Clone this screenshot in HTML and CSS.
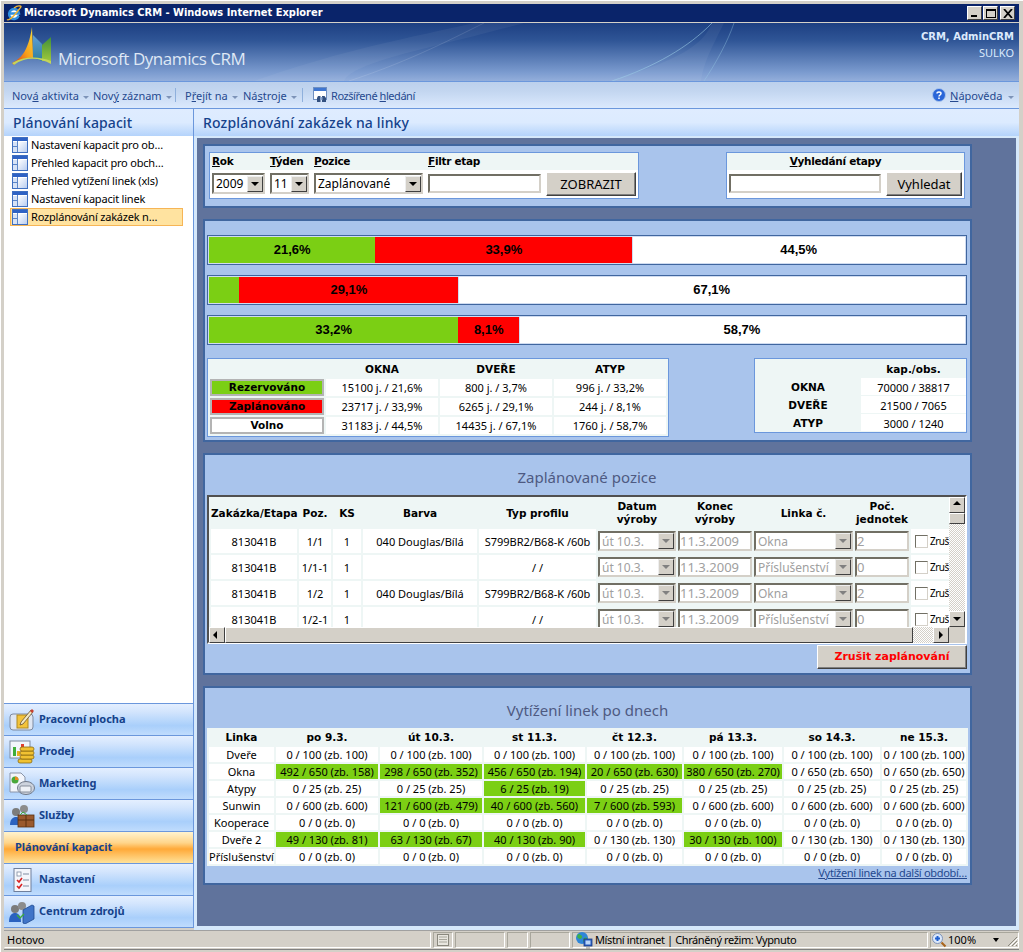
FILE: index.html
```html
<!DOCTYPE html>
<html lang="cs">
<head>
<meta charset="utf-8">
<title>Microsoft Dynamics CRM</title>
<link rel="stylesheet" href="styles.css">
</head>
<body>
<svg class="defs" width="0" height="0" aria-hidden="true">
  <defs>
    <linearGradient id="g-pane" x1="0" y1="0" x2="1" y2="1"><stop offset="0" stop-color="#fff"/><stop offset="1" stop-color="#b9cdf0"/></linearGradient>
    <symbol id="i-list" viewBox="0 0 16 16">
      <rect x=".5" y=".5" width="15" height="15" fill="#fff" stroke="#3f6fc0"/>
      <rect x="1" y="1" width="14" height="3" fill="#2f62c4"/>
      <rect x="6" y="5" width="9" height="10" fill="url(#g-pane)"/>
      <path d="M5.500 4v11M1 9.500h4" stroke="#5c86c8" fill="none"/>
      <rect x="1" y="5" width="4" height="4" fill="#d6e2f6"/>
      <rect x="1" y="10" width="4" height="5" fill="#d6e2f6"/>
    </symbol>
  </defs>
</svg>
<div class="window">
  <div class="titlebar">
    <svg class="ie" viewBox="0 0 16 16" width="16" height="16" aria-hidden="true">
      <circle cx="8" cy="8.500" r="5" fill="#fff"/>
      <path d="M12.700 10.800A5 5 0 1 1 13 8.500H3.500" fill="none" stroke="#2f8fe0" stroke-width="2.400"/>
      <path d="M1 14.500C3 16 7 12 11 7S16 1.500 14 1 10 1.500 8 3" fill="none" stroke="#f2b632" stroke-width="1.400"/>
    </svg>
    <span class="titletext">Microsoft Dynamics CRM - Windows Internet Explorer</span>
    <div class="winbtns">
      <span class="winbtn"><i class="g-min"></i></span>
      <span class="winbtn"><i class="g-max"></i></span>
      <span class="winbtn winbtn-x"><svg viewBox="0 0 10 9" width="10" height="9" aria-hidden="true"><path d="M1 0l8 9M9 0l-8 9" fill="none" stroke="#000" stroke-width="1.800"/></svg></span>
    </div>
  </div>
  <div class="brandbar">
    <svg class="swoosh" viewBox="0 0 1015 58" width="1015" height="58" aria-hidden="true">
      <path d="M250 58C330 30 380 20 470 0H520C430 25 350 38 340 58Z" fill="#fff" opacity=".05"/>
      <path d="M345 58C400 40 440 20 480 0" fill="none" stroke="#fff" stroke-opacity=".12"/>
      <path d="M605 58C680 36 700 20 708 0H720C705 30 700 40 697 58Z" fill="#fff" opacity=".05"/>
      <path d="M608 58C650 44 685 24 708 0" fill="none" stroke="#9fd0e8" stroke-opacity=".55"/>
      <path d="M700 58C712 40 724 18 730 0" fill="none" stroke="#9fd0e8" stroke-opacity=".35"/>
    </svg>
    <svg class="logo" viewBox="0 0 46 40" width="46" height="40" aria-hidden="true">
      <defs>
        <linearGradient id="g-l1" x1="0" y1="1" x2="1" y2="0"><stop offset="0" stop-color="#d62a12"/><stop offset=".5" stop-color="#f7a01a"/><stop offset="1" stop-color="#f8dc3a"/></linearGradient>
        <linearGradient id="g-l2" x1="0" y1="1" x2="0" y2="0"><stop offset="0" stop-color="#2f7f9c"/><stop offset="1" stop-color="#5d9ed8"/></linearGradient>
        <linearGradient id="g-l3" x1="0" y1="1" x2="0" y2="0"><stop offset="0" stop-color="#9ec83a"/><stop offset="1" stop-color="#3f8f3a"/></linearGradient>
      </defs>
      <path d="M21 8l9 9v17L21 31Z" fill="url(#g-l2)"/>
      <path d="M30 18l9-8 0 24H30Z" fill="url(#g-l3)"/>
      <path d="M0 36C8 32 16 26 20 0L21 31C14 30 6 33 2 38Z" fill="url(#g-l1)"/>
      <path d="M2 38C14 29 28 31 39 37L39 34C27 29 12 29 0 36Z" fill="#c4d45a"/>
    </svg>
    <span class="brandname">Microsoft Dynamics CRM</span>
    <div class="userbox">
      <div class="username">CRM, AdminCRM</div>
      <div class="userorg">SULKO</div>
    </div>
  </div>
  <div class="toolbar">
    <span class="tool tool-a">Nov<u>á</u> aktivita<i class="caret"></i></span>
    <span class="tool tool-b">Nov<u>ý</u> záznam<i class="caret"></i></span>
    <i class="toolsep"></i>
    <span class="tool tool-c">P<u>ř</u>ejít na<i class="caret"></i></span>
    <span class="tool tool-d">Ná<u>s</u>troje<i class="caret"></i></span>
    <i class="toolsep toolsep-b"></i>
    <svg class="toolicon" viewBox="0 0 16 16" width="16" height="16" aria-hidden="true">
      <rect x=".5" y=".5" width="13" height="12" fill="#fff" stroke="#6f8fc0"/>
      <rect x="1" y="1" width="12" height="3" fill="#3f76d0"/>
      <path d="M5 9h2.500v6H4v-4Zm4 0h2.500l1.500 2v4H9Z" fill="#33507f"/>
      <rect x="7" y="10" width="2.500" height="3" fill="#8aa4cc"/>
    </svg>
    <span class="tool tool-e">Rozšířené <u>h</u>ledání</span>
    <span class="toolspacer"></span>
    <svg class="helpicon" viewBox="0 0 14 14" width="14" height="14" aria-hidden="true">
      <circle cx="7" cy="7" r="6.500" fill="#2a66d8" stroke="#a9c4ec"/>
      <path d="M5 5.500C5 3.500 9 3.500 9 5.500 9 7 7 7 7 8.500" fill="none" stroke="#fff" stroke-width="1.500"/>
      <rect x="6.200" y="9.500" width="1.600" height="1.600" fill="#fff"/>
    </svg>
    <span class="tool tool-help"><u>N</u>ápověda<i class="caret"></i></span>
  </div>
  <div class="workspace">
    <aside class="sidebar">
      <div class="sidetitle">Plánování kapacit</div>
      <ul class="sidelist">
        <li class="sideitem"><svg class="listicon" aria-hidden="true"><use href="#i-list"/></svg>Nastavení kapacit pro ob…</li>
        <li class="sideitem"><svg class="listicon" aria-hidden="true"><use href="#i-list"/></svg>Přehled kapacit pro obch…</li>
        <li class="sideitem"><svg class="listicon" aria-hidden="true"><use href="#i-list"/></svg>Přehled vytížení linek (xls)</li>
        <li class="sideitem"><svg class="listicon" aria-hidden="true"><use href="#i-list"/></svg>Nastavení kapacit linek</li>
        <li class="sideitem sideitem-on"><svg class="listicon" aria-hidden="true"><use href="#i-list"/></svg>Rozplánování zakázek n…</li>
      </ul>
      <nav class="sidenav">
        <div class="navbtn">
          <svg class="navicon" viewBox="0 0 26 24" aria-hidden="true">
            <rect x="1" y="6" width="23" height="16" rx="3" fill="#dfe6f2" stroke="#7f8ba0"/>
            <rect x="8" y="7" width="11" height="13" fill="#f3c33a" stroke="#b08a20"/>
            <path d="M12 14L22 2l2 2-10 12-3 1Z" fill="#f2e8c0" stroke="#6a5030" stroke-width=".800"/>
            <path d="M21 3l2-2 2 2-2 2Z" fill="#c84030"/>
          </svg>
          Pracovní plocha
        </div>
        <div class="navbtn">
          <svg class="navicon" viewBox="0 0 26 24" aria-hidden="true">
            <rect x="1" y="1" width="20" height="17" fill="#f2f5fb" stroke="#7f8ba0"/>
            <rect x="4" y="7" width="3" height="9" fill="#3fae3a"/>
            <rect x="8" y="11" width="3" height="5" fill="#e8b020"/>
            <rect x="12" y="4" width="3" height="12" fill="#e04030"/>
            <g fill="#f1c232" stroke="#8a6a10" stroke-width=".800"><rect x="9" y="19" width="14" height="4" rx="2"/><rect x="11" y="15" width="14" height="4" rx="2"/><rect x="11" y="11" width="14" height="4" rx="2"/><rect x="11" y="7" width="14" height="4" rx="2"/></g>
          </svg>
          Prodej
        </div>
        <div class="navbtn">
          <svg class="navicon" viewBox="0 0 26 24" aria-hidden="true">
            <path d="M1 1h11l4 4v15H1Z" fill="#f2f5fb" stroke="#8a94a8"/>
            <circle cx="6" cy="8" r="3.500" fill="#4aa83a"/>
            <path d="M6 8V4.500A3.500 3.500 0 0 1 9.500 8Z" fill="#e88a20"/>
            <ellipse cx="17" cy="16" rx="8.500" ry="6.500" fill="#cdd3dd" stroke="#6f7888"/>
            <rect x="11" y="14" width="11" height="6" rx="1" fill="#eef1f6" stroke="#6f7888" stroke-width=".800"/>
          </svg>
          Marketing
        </div>
        <div class="navbtn">
          <svg class="navicon" viewBox="0 0 26 24" aria-hidden="true">
            <circle cx="7" cy="8" r="4" fill="#7c7c7c"/><circle cx="15" cy="5" r="4" fill="#8c8c8c"/>
            <path d="M1 21c0-7 4-8 6-8s5 1 5 8Z" fill="#2a62c0"/>
            <rect x="9" y="11" width="16" height="12" fill="#9a5a2e" stroke="#5a3010" stroke-width=".800"/>
            <path d="M9 16h16M17 11v12" stroke="#5a3010"/>
            <path d="M11 11l3-3 4 3" fill="none" stroke="#3fae3a"/>
          </svg>
          Služby
        </div>
        <div class="navbtn navbtn-on">Plánování kapacit</div>
        <div class="navbtn">
          <svg class="navicon" viewBox="0 0 26 24" aria-hidden="true">
            <rect x="5" y="0.500" width="17" height="23" fill="#f4f6fb" stroke="#6f7f9c"/>
            <rect x="8" y="4" width="4" height="4" fill="#fff" stroke="#7f8ba0" stroke-width=".800"/>
            <path d="M14 6h6M14 12h6M14 18h6" stroke="#7f8ba0"/>
            <path d="M8 12l2 2 3-4M8 18l2 2 3-4" fill="none" stroke="#d82020" stroke-width="1.600"/>
          </svg>
          Nastavení
        </div>
        <div class="navbtn">
          <svg class="navicon" viewBox="0 0 26 24" aria-hidden="true">
            <circle cx="6" cy="9" r="4" fill="#7c7c7c"/><circle cx="13" cy="6" r="4" fill="#8c8c8c"/>
            <path d="M0 22c0-7 3-9 6-9s6 2 6 9Z" fill="#2a62c0"/>
            <path d="M14 10l9-5 2 1v13l-9 5-2-1Z" fill="#3f74c8" stroke="#1f4a90" stroke-width=".800"/>
            <path d="M8 15l3 3 4-4" fill="none" stroke="#3fae3a" stroke-width="1.400"/>
          </svg>
          Centrum zdrojů
        </div>
      </nav>
    </aside>
    <main class="content">
      <h1 class="pagetitle">Rozplánování zakázek na linky</h1>
      <div class="stage">
        <section class="panel panel-filter">
          <form class="fbox fbox-filter">
            <div class="fhead">
              <label class="flabel col-year"><u>R</u>ok</label>
              <label class="flabel col-week"><u>T</u>ýden</label>
              <label class="flabel col-pos"><u>P</u>ozice</label>
              <label class="flabel col-filter"><u>F</u>iltr etap</label>
            </div>
            <div class="frow">
              <div class="select col-year"><span class="seltext">2009</span><i class="selbtn"></i></div>
              <div class="select col-week"><span class="seltext">11</span><i class="selbtn"></i></div>
              <div class="select col-pos"><span class="seltext">Zaplánované</span><i class="selbtn"></i></div>
              <input class="input col-filter" type="text" aria-label="Filtr etap">
              <button class="btn btn-show" type="button">ZOBRAZIT</button>
            </div>
          </form>
          <form class="fbox fbox-search">
            <div class="fhead fhead-center"><label class="flabel"><u>V</u>yhledání etapy</label></div>
            <div class="frow">
              <input class="input input-search" type="text" aria-label="Vyhledání etapy">
              <button class="btn btn-search" type="button">Vyhledat</button>
            </div>
          </form>
        </section>

        <section class="panel panel-load">
          <div class="bar">
            <div class="seg seg-green" style="width:22%">21,6%</div>
            <div class="seg seg-red" style="width:34%">33,9%</div>
            <div class="seg seg-white" style="width:44%">44,5%</div>
          </div>
          <div class="bar">
            <div class="seg seg-green" style="width:4%"></div>
            <div class="seg seg-red" style="width:29%">29,1%</div>
            <div class="seg seg-white" style="width:67%">67,1%</div>
          </div>
          <div class="bar">
            <div class="seg seg-green" style="width:33%">33,2%</div>
            <div class="seg seg-red" style="width:8%">8,1%</div>
            <div class="seg seg-white" style="width:59%">58,7%</div>
          </div>
          <div class="stats">
            <table class="tbl-stats">
              <colgroup><col class="c114"><col class="c112"><col class="c112"><col class="c112"></colgroup>
              <thead><tr><th></th><th>OKNA</th><th>DVEŘE</th><th>ATYP</th></tr></thead>
              <tbody>
                <tr><th class="legend legend-green">Rezervováno</th><td>15100 j. / 21,6%</td><td>800 j. / 3,7%</td><td>996 j. / 33,2%</td></tr>
                <tr><th class="legend legend-red">Zaplánováno</th><td>23717 j. / 33,9%</td><td>6265 j. / 29,1%</td><td>244 j. / 8,1%</td></tr>
                <tr><th class="legend legend-white">Volno</th><td>31183 j. / 44,5%</td><td>14435 j. / 67,1%</td><td>1760 j. / 58,7%</td></tr>
              </tbody>
            </table>
            <table class="tbl-cap">
              <colgroup><col class="c106"><col class="c105"></colgroup>
              <thead><tr><th></th><th>kap./obs.</th></tr></thead>
              <tbody>
                <tr><th>OKNA</th><td>70000 / 38817</td></tr>
                <tr><th>DVEŘE</th><td>21500 / 7065</td></tr>
                <tr><th>ATYP</th><td>3000 / 1240</td></tr>
              </tbody>
            </table>
          </div>
        </section>

        <section class="panel panel-plan">
          <h2 class="paneltitle">Zaplánované pozice</h2>
          <div class="scrollbox">
            <div class="scrollview">
              <table class="tbl-plan">
                <colgroup><col class="p1"><col class="p2"><col class="p3"><col class="p4"><col class="p5"><col class="p6"><col class="p7"><col class="p8"><col class="p9"><col class="p10"></colgroup>
                <thead><tr><th>Zakázka/Etapa</th><th>Poz.</th><th>KS</th><th>Barva</th><th>Typ profilu</th><th>Datum<br>výroby</th><th>Konec<br>výroby</th><th>Linka č.</th><th>Poč.<br>jednotek</th><th></th></tr></thead>
                <tbody>
                  <tr><td>813041B</td><td>1/1</td><td>1</td><td>040 Douglas/Bílá</td><td>S799BR2/B68-K /60b</td>
                    <td class="ctl"><div class="select select-off"><span class="seltext">út 10.3.</span><i class="selbtn"></i></div></td>
                    <td class="ctl"><input class="input input-off" type="text" value="11.3.2009" disabled></td>
                    <td class="ctl"><div class="select select-off"><span class="seltext">Okna</span><i class="selbtn"></i></div></td>
                    <td class="ctl"><input class="input input-off" type="text" value="2" disabled></td>
                    <td class="zrus"><label class="zruslabel"><input class="check" type="checkbox">Zruš</label></td></tr>
                  <tr><td>813041B</td><td>1/1-1</td><td>1</td><td></td><td>/ /</td>
                    <td class="ctl"><div class="select select-off"><span class="seltext">út 10.3.</span><i class="selbtn"></i></div></td>
                    <td class="ctl"><input class="input input-off" type="text" value="11.3.2009" disabled></td>
                    <td class="ctl"><div class="select select-off"><span class="seltext">Příslušenství</span><i class="selbtn"></i></div></td>
                    <td class="ctl"><input class="input input-off" type="text" value="0" disabled></td>
                    <td class="zrus"><label class="zruslabel"><input class="check" type="checkbox">Zruš</label></td></tr>
                  <tr><td>813041B</td><td>1/2</td><td>1</td><td>040 Douglas/Bílá</td><td>S799BR2/B68-K /60b</td>
                    <td class="ctl"><div class="select select-off"><span class="seltext">út 10.3.</span><i class="selbtn"></i></div></td>
                    <td class="ctl"><input class="input input-off" type="text" value="11.3.2009" disabled></td>
                    <td class="ctl"><div class="select select-off"><span class="seltext">Okna</span><i class="selbtn"></i></div></td>
                    <td class="ctl"><input class="input input-off" type="text" value="2" disabled></td>
                    <td class="zrus"><label class="zruslabel"><input class="check" type="checkbox">Zruš</label></td></tr>
                  <tr><td>813041B</td><td>1/2-1</td><td>1</td><td></td><td>/ /</td>
                    <td class="ctl"><div class="select select-off"><span class="seltext">út 10.3.</span><i class="selbtn"></i></div></td>
                    <td class="ctl"><input class="input input-off" type="text" value="11.3.2009" disabled></td>
                    <td class="ctl"><div class="select select-off"><span class="seltext">Příslušenství</span><i class="selbtn"></i></div></td>
                    <td class="ctl"><input class="input input-off" type="text" value="0" disabled></td>
                    <td class="zrus"><label class="zruslabel"><input class="check" type="checkbox">Zruš</label></td></tr>
                </tbody>
              </table>
            </div>
            <div class="vscroll">
              <span class="sbtn"><i class="tri tri-up"></i></span>
              <span class="sthumb"></span>
              <span class="strack"></span>
              <span class="sbtn"><i class="tri tri-down"></i></span>
            </div>
            <div class="hscroll">
              <span class="sbtn"><i class="tri tri-left"></i></span>
              <span class="sthumb-h"></span>
              <span class="strack-h"></span>
              <span class="sbtn"><i class="tri tri-right"></i></span>
            </div>
            <div class="scorner"></div>
          </div>
          <div class="actions"><button class="btn btn-cancel" type="button">Zrušit zaplánování</button></div>
        </section>

        <section class="panel panel-week">
          <h2 class="paneltitle">Vytížení linek po dnech</h2>
          <table class="tbl-week">
            <colgroup><col class="w0"><col class="w1"><col class="w2"><col class="w3"><col class="w4"><col class="w5"><col class="w6"><col class="w7"></colgroup>
            <thead><tr><th>Linka</th><th>po 9.3.</th><th>út 10.3.</th><th>st 11.3.</th><th>čt 12.3.</th><th>pá 13.3.</th><th>so 14.3.</th><th>ne 15.3.</th></tr></thead>
            <tbody>
              <tr><td>Dveře</td><td>0 / 100 (zb. 100)</td><td>0 / 100 (zb. 100)</td><td>0 / 100 (zb. 100)</td><td>0 / 100 (zb. 100)</td><td>0 / 100 (zb. 100)</td><td>0 / 100 (zb. 100)</td><td>0 / 100 (zb. 100)</td></tr>
              <tr><td>Okna</td><td class="on">492 / 650 (zb. 158)</td><td class="on">298 / 650 (zb. 352)</td><td class="on">456 / 650 (zb. 194)</td><td class="on">20 / 650 (zb. 630)</td><td class="on">380 / 650 (zb. 270)</td><td>0 / 650 (zb. 650)</td><td>0 / 650 (zb. 650)</td></tr>
              <tr><td>Atypy</td><td>0 / 25 (zb. 25)</td><td>0 / 25 (zb. 25)</td><td class="on">6 / 25 (zb. 19)</td><td>0 / 25 (zb. 25)</td><td>0 / 25 (zb. 25)</td><td>0 / 25 (zb. 25)</td><td>0 / 25 (zb. 25)</td></tr>
              <tr><td>Sunwin</td><td>0 / 600 (zb. 600)</td><td class="on">121 / 600 (zb. 479)</td><td class="on">40 / 600 (zb. 560)</td><td class="on">7 / 600 (zb. 593)</td><td>0 / 600 (zb. 600)</td><td>0 / 600 (zb. 600)</td><td>0 / 600 (zb. 600)</td></tr>
              <tr><td>Kooperace</td><td>0 / 0 (zb. 0)</td><td>0 / 0 (zb. 0)</td><td>0 / 0 (zb. 0)</td><td>0 / 0 (zb. 0)</td><td>0 / 0 (zb. 0)</td><td>0 / 0 (zb. 0)</td><td>0 / 0 (zb. 0)</td></tr>
              <tr><td>Dveře 2</td><td class="on">49 / 130 (zb. 81)</td><td class="on">63 / 130 (zb. 67)</td><td class="on">40 / 130 (zb. 90)</td><td>0 / 130 (zb. 130)</td><td class="on">30 / 130 (zb. 100)</td><td>0 / 130 (zb. 130)</td><td>0 / 130 (zb. 130)</td></tr>
              <tr><td>Příslušenství</td><td>0 / 0 (zb. 0)</td><td>0 / 0 (zb. 0)</td><td>0 / 0 (zb. 0)</td><td>0 / 0 (zb. 0)</td><td>0 / 0 (zb. 0)</td><td>0 / 0 (zb. 0)</td><td>0 / 0 (zb. 0)</td></tr>
            </tbody>
          </table>
          <div class="morelink"><a href="#">Vytížení linek na další období…</a></div>
        </section>
      </div>
    </main>
  </div>
  <div class="statusbar">
    <span class="st st-main">Hotovo</span>
    <span class="st st-b"><svg viewBox="0 0 14 14" width="14" height="14" aria-hidden="true"><rect x="1.500" y="1.500" width="11" height="11" fill="#e8e6df" stroke="#8a887e"/><path d="M3 4h8M3 6.500h8M3 9h8" stroke="#a8a69c"/></svg></span>
    <span class="st st-c"></span>
    <span class="st st-d"></span>
    <span class="st st-e"></span>
    <span class="st st-zone">
      <svg class="globe" viewBox="0 0 18 18" width="18" height="18" aria-hidden="true">
        <circle cx="7" cy="7" r="6" fill="#2f86d8"/>
        <path d="M3 3c2 0 3 1 4 2s-1 3-2 3-2-1-3-2Zm6 4c2-1 3 0 3 1s-2 3-3 3-1-3 0-4Z" fill="#3fb04a"/>
        <rect x="9" y="8" width="8" height="7" fill="#2a5fc4" stroke="#1a3a80" stroke-width=".800"/>
        <rect x="10.500" y="9.500" width="5" height="4" fill="#bcd6f6"/>
        <path d="M11 17h4" stroke="#8a887e"/>
      </svg>
      Místní intranet | Chráněný režim: Vypnuto
    </span>
    <span class="st st-zoom">
      <svg viewBox="0 0 16 16" width="16" height="16" aria-hidden="true">
        <circle cx="6.500" cy="6.500" r="5" fill="#dbe8fb" stroke="#7f94b8"/>
        <path d="M4 6.500h5M6.500 4v5" stroke="#1f5fd0" stroke-width="2"/>
        <path d="M10.500 10.500l4 4" stroke="#a8641c" stroke-width="2.200"/>
      </svg>
      <span class="zoomtext">100%</span>
      <i class="zoomcaret"></i>
      <svg class="grip" viewBox="0 0 12 12" width="12" height="12" aria-hidden="true"><path d="M11 2L2 11M11 6l-5 5M11 10l-1 1" stroke="#8a887e" fill="none"/><path d="M12 3l-8 8M12 7l-4 4" stroke="#fff" fill="none"/></svg>
    </span>
  </div>
</div>
</body>
</html>
```
FILE: styles.css
```css
* { box-sizing: border-box; }
html, body { margin: 0; padding: 0; }
body { width: 1023px; height: 952px; overflow: hidden; background: #d4d0c8; font: 11px/15px "Noto Sans", "Liberation Sans", sans-serif; color: #000; }
.defs { position: absolute; }
.window { width: 1023px; height: 952px; padding: 3px 4px 0 3px; display: flex; flex-direction: column; border-top: 1px solid #fff; border-left: 1px solid #fff; }

/* Title bar */
.titlebar { height: 19px; flex: none; background: #0a246a; color: #fff; display: flex; align-items: center; position: relative; border-bottom: 1px solid #d4d0c8; }
.ie { margin: 0 2px 0 2px; flex: none; }
.titletext { font: bold 11px/16px "DejaVu Sans", sans-serif; font-stretch: condensed; white-space: nowrap; }
.winbtns { margin-left: auto; margin-right: 4px; display: flex; gap: 1px; }
.winbtn { width: 15px; height: 14px; background: #d4d0c8; border: 1px solid; border-color: #fff #404040 #404040 #fff; position: relative; display: flex; align-items: center; justify-content: center; }
.winbtn-x { margin-left: 1px; }
.g-min { position: absolute; left: 3px; bottom: 2px; width: 6px; height: 2px; background: #000; }
.g-max { width: 10px; height: 9px; border: 1px solid #000; border-top-width: 2px; }

/* Brand */
.brandbar { height: 59px; flex: none; position: relative; background: linear-gradient(#1d3f82 0, #2f5596 30%, #7b9bcf 85%, #93aedb 100%); border-bottom: 1px solid #6b97dc; }
.swoosh { position: absolute; left: 0; top: 0; }
.logo { position: absolute; left: 8px; top: 4px; }
.brandname { position: absolute; left: 54px; top: 23px; font: 400 17px/26px "Open Sans", sans-serif; color: #dfe8f5; letter-spacing: -.45px; white-space: nowrap; }
.userbox { position: absolute; right: 5px; top: 6px; text-align: right; color: #dceafc; }
.username { font: bold 10px/16px "DejaVu Sans", sans-serif; }
.userorg { font: 11px/16px "Noto Sans", sans-serif; }

/* Toolbar */
.toolbar { height: 27px; flex: none; display: flex; align-items: center; background: linear-gradient(#bcd0ec 0, #c3d6f0 35%, #dbe9fd 100%); border-bottom: 1px solid #6b97dc; color: #25498f; padding-left: 8px; }
.tool { white-space: nowrap; display: inline-block; }
.tool-a { width: 81px; }
.tool-b { width: 82px; }
.tool-c { width: 58px; }
.tool-d { width: 59px; }
.tool-e { margin-left: 2px; letter-spacing: -.45px; }
.tool-help { width: 69px; margin-left: 4px; }
.caret { display: inline-block; vertical-align: middle; width: 0; height: 0; margin-left: 4px; margin-top: 1px; border: 3px solid transparent; border-top: 3px solid #7d93b8; border-bottom: 0; }
.tool-help .caret { margin-left: 6px; }
.toolsep { width: 1px; height: 14px; background: #8fb0dc; margin-right: 9px; }
.toolsep-b { margin-right: 10px; }
.toolicon { flex: none; }
.toolspacer { flex: 1; }
.helpicon { flex: none; }

/* Workspace */
.workspace { flex: 1; min-height: 0; display: flex; }
.sidebar { width: 190px; flex: none; background: #fff; border-right: 1px solid #6b97dc; display: flex; flex-direction: column; margin-bottom: 2px; }
.sidetitle { height: 27px; flex: none; padding: 5px 0 0 9px; font: 500 14px/17px "Noto Sans", sans-serif; letter-spacing: .1px; color: #15428b; background: linear-gradient(#dfecff 0, #dcebff 50%, #b4d3fb 100%); }
.sidelist { list-style: none; margin: 0; padding: 0 10px 0 6px; flex: 1; }
.sideitem { height: 18px; display: flex; align-items: center; padding-left: 1px; white-space: nowrap; line-height: 16px; letter-spacing: -.2px; border: 1px solid transparent; }
.sideitem-on { background: #ffe3a0; border-color: #f6b556; }
.listicon { width: 16px; height: 16px; margin-right: 3px; flex: none; }
.sidenav { flex: none; border-bottom: 1px solid #6b97dc; }
.navbtn { height: 32px; display: flex; align-items: center; padding: 0 0 2px 35px; position: relative; border-top: 1px solid #6b97dc; font: bold 11px/15px "Noto Sans", sans-serif; color: #15428b; background: linear-gradient(#e4efff 0, #d3e5fd 25%, #a9cffb 70%, #c0dcfd 100%); }
.navbtn-on { padding-left: 11px; background: linear-gradient(#fff3cf 0, #ffd58a 35%, #ffa938 55%, #ffe29a 100%); }
.navicon { position: absolute; left: 5px; top: 4px; width: 26px; height: 24px; }

/* Main */
.content { flex: 1; min-width: 0; display: flex; flex-direction: column; background: #d5e8fb; padding-bottom: 4px; }
.pagetitle { height: 27px; flex: none; margin: 0; padding: 5px 0 0 9px; font: 500 14px/17px "Noto Sans", sans-serif; letter-spacing: .15px; color: #15428b; background: linear-gradient(#dfecff 0, #dcebff 50%, #b4d3fb 100%); }
.stage { flex: 1; margin: 2px 3px 0; background: #60739c; padding: 6px 0 0 6px; display: flex; flex-direction: column; gap: 11px; }
.panel { width: 769px; flex: none; background: #a9c4ec; border: 2px solid #40669f; }
.panel-filter { height: 64px; padding: 6px 5px 0 4px; display: flex; justify-content: space-between; align-items: flex-start; }
.panel-load { height: 223px; padding: 14px 3px 0 2px; }
.panel-plan { height: 222px; padding: 0 3px 0 2px; }
.panel-week { height: 199px; padding: 0 2px; }

/* Filter */
.fbox { background: #fff; border: 1px solid #6b97dc; height: 47px; }
.fbox-filter { width: 430px; }
.fbox-search { width: 239px; }
.fhead { height: 17px; background: #eef6f5; display: flex; gap: 5px; padding-left: 2px; }
.fhead-center { justify-content: center; padding: 0 20px 0 0; }
.flabel { font: bold 10.500px/17px "DejaVu Sans", sans-serif; letter-spacing: -.3px; white-space: nowrap; }
.frow { display: flex; gap: 5px; padding: 2px 2px 0; align-items: flex-start; height: 27px; }
.col-year { width: 53px; flex: none; }
.col-week { width: 39px; flex: none; }
.col-pos { width: 109px; flex: none; }
.col-filter { width: 113px; flex: none; }
.frow .select { margin-top: 1px; height: 21px; }
.frow .input { margin-top: 2px; height: 19px; }
.select { height: 20px; display: flex; align-items: center; text-align: left; background: #fff; border: 2px solid; border-color: #716f64 #d4d0c8 #d4d0c8 #716f64; padding-left: 2px; font-size: 12px; overflow: hidden; min-width: 0; }
.seltext { flex: 1; min-width: 0; white-space: nowrap; overflow: hidden; }
.selbtn { flex: none; width: 16px; height: 16px; background: #d4d0c8; border: 1px solid; border-color: #eee #404040 #404040 #eee; position: relative; }
.selbtn::after { content: ""; position: absolute; left: 3px; top: 5px; border: 4px solid transparent; border-top: 4px solid #000; border-bottom: 0; }
.input { height: 20px; background: #fff; border: 2px solid; border-color: #716f64 #d4d0c8 #d4d0c8 #716f64; padding: 0; font: 12px/16px "Noto Sans", sans-serif; outline: 0; }
.input-search { width: 152px; flex: none; }
.btn { background: #d4d0c8; border: 1px solid; border-color: #fff #404040 #404040 #fff; box-shadow: inset -1px -1px #808080; color: #000; font: 13px/16px "Noto Sans", sans-serif; padding: 0; height: 24px; }
.btn-show { width: 91px; }
.btn-search { width: 76px; }

/* Bars */
.bar { height: 30px; margin-bottom: 10px; display: flex; padding: 1px; background: #d0dcf0; border: 1px solid #40669f; }
.seg { height: 100%; display: flex; align-items: center; justify-content: center; font: bold 13px/16px "Liberation Sans", sans-serif; color: #000; }
.seg-green { background: #7bcf14; box-shadow: 1px 0 #d0dcf0; position: relative; }
.seg-red { background: #f00; box-shadow: 1px 0 #d0dcf0; position: relative; }
.seg-white { background: #fff; }

/* Stats */
.stats { display: flex; justify-content: space-between; align-items: flex-start; margin-top: 13px; }
table { border-collapse: separate; table-layout: fixed; }
th { font: bold 10.500px/15px "DejaVu Sans", sans-serif; padding: 0; text-align: center; }
td { padding: 0; text-align: center; background: #fff; white-space: nowrap; }
.c114 { width: 114px; }
.c112 { width: 112px; }
.c106 { width: 106px; }
.c105 { width: 105px; }
.tbl-stats { width: 462px; background: #eef6f5; border: 1px solid #6b97dc; border-spacing: 2px; }
.tbl-stats thead th { height: 16px; }
.tbl-stats tbody td, .tbl-stats tbody th { height: 17px; }
.legend { border: 2px solid #b4b4b4; line-height: 13px; }
.legend-green { background: #7bcf14; }
.legend-red { background: #f00; }
.legend-white { background: #fff; }
.tbl-cap { width: 213px; background: #eef6f5; border: 1px solid #6b97dc; border-spacing: 0 1px; }
.tbl-cap thead th { height: 17px; padding-top: 2px; }
.tbl-cap tbody td, .tbl-cap tbody th { height: 17px; padding-top: 2px; }

/* Plan */
.paneltitle { margin: 0; height: 40px; padding-top: 13px; text-align: center; font: 15px/19px "Noto Sans", sans-serif; color: #4e5a82; }
.scrollbox { width: 760px; height: 149px; background: #eef6f5; border: 2px solid; border-color: #505050 #fff #fff #505050; display: grid; grid-template-columns: 740px 16px; grid-template-rows: 130px 16px; }
.scrollview { overflow: hidden; }
.tbl-plan { width: 764px; border-spacing: 2px; background: #eef6f5; }
.p1 { width: 86px; } .p2 { width: 32px; } .p3 { width: 28px; } .p4 { width: 114px; } .p5 { width: 117px; }
.p6 { width: 78px; } .p7 { width: 74px; } .p8 { width: 99px; } .p9 { width: 54px; } .p10 { width: 60px; }
.tbl-plan thead th { height: 28px; line-height: 13px; }
.tbl-plan tbody td { height: 24px; }
.ctl { background: #eef6f5; vertical-align: middle; }
.ctl .input, .ctl .select { width: 100%; }
.select-off, .input-off { color: #a0a0a0; background: #fff; border-color: #716f64 #d4d0c8 #d4d0c8 #716f64; }
.input-off { font-size: 13px; }
.select-off { font-size: 12px; }
.select-off .selbtn::after { border-top-color: #808080; }
.zrus { text-align: left; padding-left: 4px; }
.zruslabel { display: flex; align-items: center; gap: 2px; white-space: nowrap; font-size: 10px; letter-spacing: -.5px; }
.check { appearance: none; width: 13px; height: 13px; margin: 0; background: #fff; border: 1px solid; border-color: #716f64 #d4d0c8 #d4d0c8 #716f64; flex: none; }
.vscroll { display: flex; flex-direction: column; background: #d4d0c8; }
.hscroll { display: flex; background: #d4d0c8; }
.sbtn { flex: none; width: 16px; height: 16px; background: #d4d0c8; border: 1px solid; border-color: #fff #404040 #404040 #fff; position: relative; }
.strack { flex: 1; background: repeating-conic-gradient(#fff 0 25%, #d4d0c8 0 50%) 0 0 / 2px 2px; }
.sthumb { flex: none; height: 11px; background: #d4d0c8; border: 1px solid; border-color: #fff #404040 #404040 #fff; }
.sthumb-h { flex: 1; background: #d4d0c8; border: 1px solid; border-color: #fff #404040 #404040 #fff; }
.strack-h { flex: none; width: 20px; background: repeating-conic-gradient(#fff 0 25%, #d4d0c8 0 50%) 0 0 / 2px 2px; }
.scorner { background: #d4d0c8; }
.tri { position: absolute; width: 0; height: 0; border: 4px solid transparent; }
.tri-up { left: 3px; top: 3px; border-top: 0; border-bottom-color: #000; }
.tri-down { left: 3px; top: 5px; border-bottom: 0; border-top-color: #000; }
.tri-left { left: 3px; top: 3px; border-left: 0; border-right-color: #000; }
.tri-right { left: 5px; top: 3px; border-right: 0; border-left-color: #000; }
.actions { display: flex; justify-content: flex-end; margin-top: 1px; }
.btn-cancel { width: 150px; height: 24px; color: #f00; font: bold 11px/16px "DejaVu Sans", sans-serif; }

/* Week */
.tbl-week { width: 761px; border-spacing: 2px; background: #eef6f5; }
.w0 { width: 65px; } .w1 { width: 102px; } .w2 { width: 102px; } .w3 { width: 101px; } .w4 { width: 95px; } .w5 { width: 98px; } .w6 { width: 96px; } .w7 { width: 84px; }
.tbl-week thead th { height: 15px; }
.tbl-week tbody td { height: 15px; line-height: 15px; }
.tbl-week td.on { background: #7bcf14; }
.morelink { text-align: right; padding-right: 1px; line-height: 14px; letter-spacing: -.3px; }
.morelink a { color: #25498f; }

/* Status */
.statusbar { height: 20px; flex: none; display: flex; gap: 2px; background: #d4d0c8; border-top: 1px solid #a0a0a0; padding-top: 1px; margin-bottom: 2px; border-bottom: 1px solid #808080; }
.st { height: 16px; display: flex; align-items: center; border: 1px solid; border-color: #a8a69c #fff #fff #a8a69c; line-height: 14px; white-space: nowrap; }
.st-main { width: 427px; padding-left: 2px; border-left-color: transparent; border-top-color: transparent; }
.st-b { width: 20px; justify-content: center; }
.st-c { width: 50px; }
.st-d { width: 21px; }
.st-e { width: 40px; }
.st-zone { width: 356px; padding-left: 2px; gap: 2px; letter-spacing: -.4px; }
.st-zoom { flex: 1; padding-left: 0; position: relative; gap: 1px; }
.zoomcaret { position: absolute; left: 62px; top: 5px; border: 3px solid transparent; border-top: 4px solid #000; border-bottom: 0; }
.grip { position: absolute; right: 0; bottom: 0; }
```
